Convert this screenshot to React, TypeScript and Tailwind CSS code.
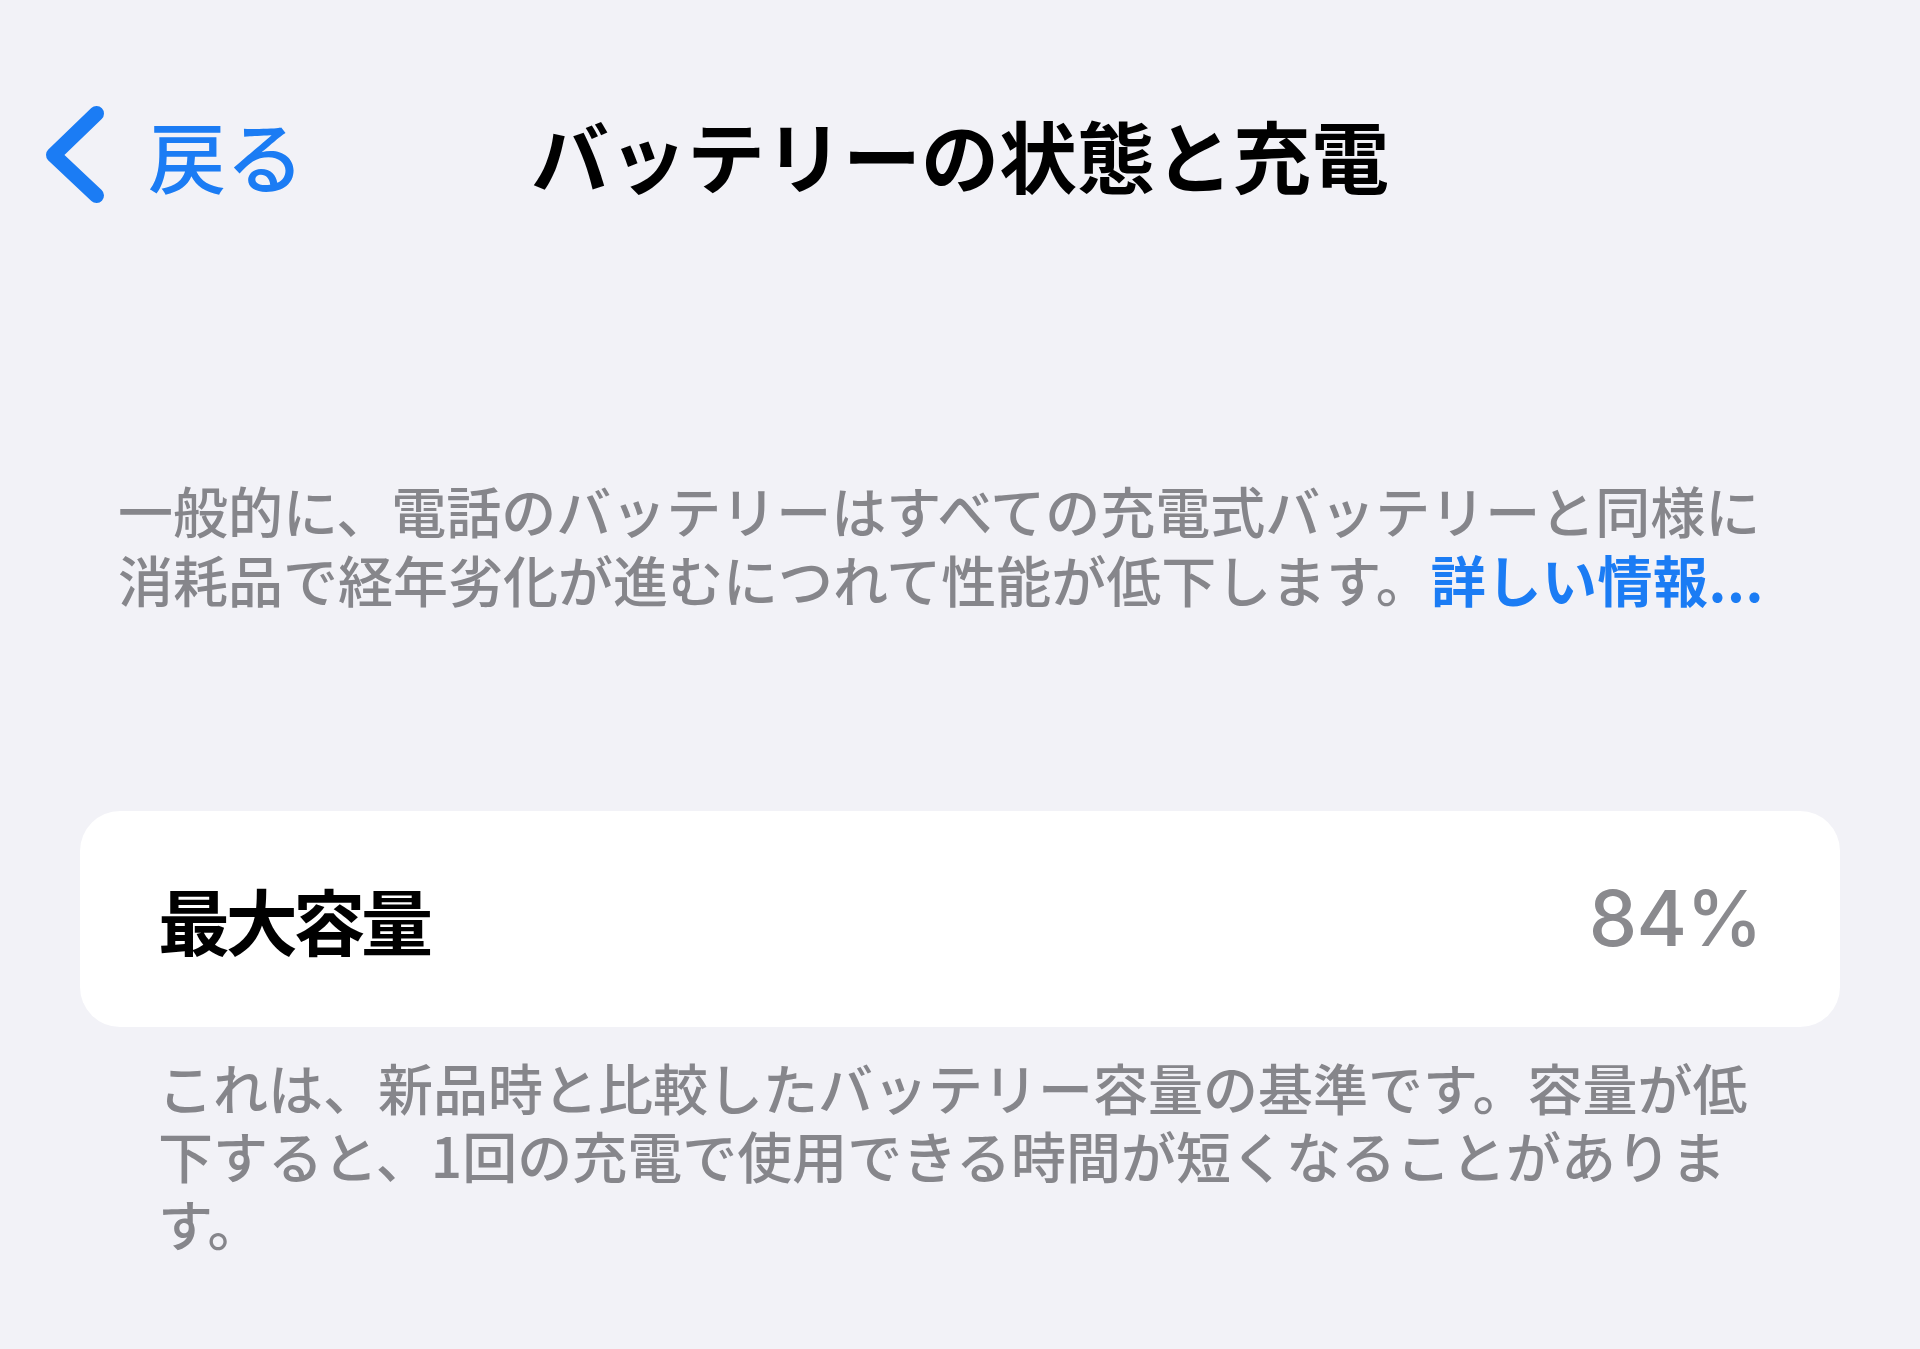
const jp = { fontFamily: '"Noto Sans CJK JP", "Noto Sans", sans-serif' };

const BackChevron = () => (
  <svg width="70" height="115" viewBox="0 0 70 115" className="shrink-0" aria-hidden="true">
    <polyline
      points="56.5,15.5 13.5,57 56.5,97.5"
      fill="none"
      stroke="#1b7cf4"
      strokeWidth="15"
      strokeLinecap="round"
      strokeLinejoin="round"
    />
  </svg>
);

export default function App() {
  return (
    <div className="w-[1920px] h-[1349px] overflow-hidden bg-[#f2f2f7]" style={jp}>
      {/* nav bar */}
      <header className="grid grid-cols-[1fr_auto_1fr] items-center pt-[98px]">
        <button className="flex items-center pl-[40px] text-[#1b7cf4]">
          <BackChevron />
          <span className="ml-[38px] -mt-[2px] text-[78px] leading-[115px] font-medium">戻る</span>
        </button>
        <h1 className="-mt-[3px] text-[78px] leading-[115px] font-bold text-black">バッテリーの状態と充電</h1>
        <div />
      </header>

      <p className="mt-[262px] ml-[118px] w-[1668px] text-[55px] leading-[69px] font-medium text-[#86868b]">
        一般的に、電話のバッテリーはすべての充電式バッテリーと同様に消耗品で経年劣化が進むにつれて性能が低下します。
        <a href="#" className="text-[#1b7cf4] font-bold tracking-[0.01em]">詳しい情報...</a>
      </p>

      {/* maximum capacity row */}
      <div className="mt-[198px] ml-[80px] w-[1760px] h-[216px] rounded-[40px] bg-white flex items-center justify-between pl-[78px] pr-[78px]">
        <span className="text-[72px] font-bold tracking-[-0.06em] text-black">最大容量</span>
        <span
          className="text-[77px] font-medium tracking-[-0.01em] text-[#8a8a8e]"
          style={{ fontFamily: 'Inter, "Liberation Sans", sans-serif' }}
        >
          84%
        </span>
      </div>

      <p className="mt-[25px] ml-[158px] w-[1604px] text-[55px] leading-[68px] font-medium text-[#86868b]">
        これは、新品時と比較したバッテリー容量の基準です。容量が低下すると、1回の充電で使用できる時間が短くなることがあります。
      </p>
    </div>
  );
}
